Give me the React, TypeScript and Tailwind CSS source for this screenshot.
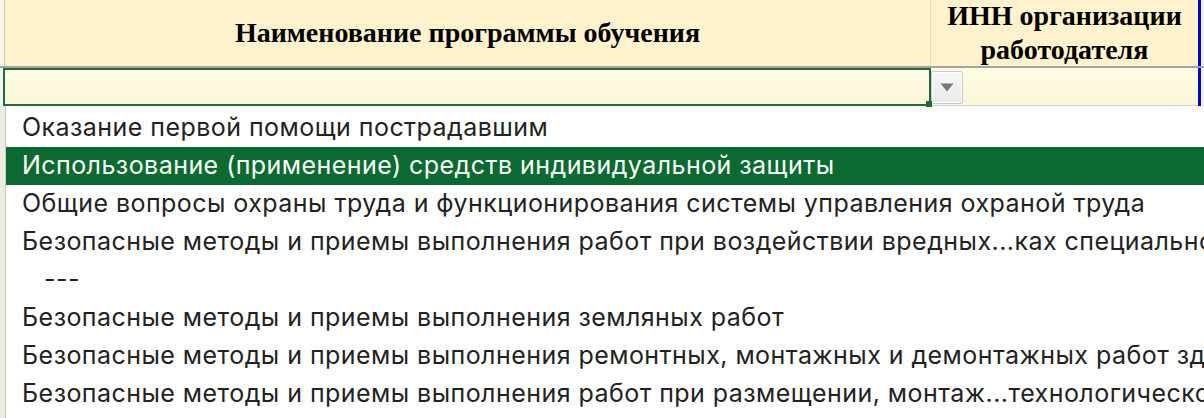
const OPTIONS = [
  "Оказание первой помощи пострадавшим",
  "Использование (применение) средств индивидуальной защиты",
  "Общие вопросы охраны труда и функционирования системы управления охраной труда",
  "Безопасные методы и приемы выполнения работ при воздействии вредных...ках специального",
  "---",
  "Безопасные методы и приемы выполнения земляных работ",
  "Безопасные методы и приемы выполнения ремонтных, монтажных и демонтажных работ зданий",
  "Безопасные методы и приемы выполнения работ при размещении, монтаж...технологического",
];

const SELECTED = 1;

export default function App() {
  return (
    <div className="relative w-[1204px] h-[418px] overflow-hidden bg-white">
      {/* Header row */}
      <div className="flex h-[66px] bg-[#fff2cc] font-['Liberation_Serif',serif] font-bold text-black">
        <div className="w-[5px] bg-[#f7f3e6] border-r border-[#c8c8c8]" />
        <div className="w-[926px] flex items-center justify-center text-[28px] border-r border-[#e3dcc4]">
          Наименование программы обучения
        </div>
        <div className="w-[267px] flex flex-col items-center justify-center text-[28px] leading-[34px]">
          <span>ИНН организации</span>
          <span>работодателя</span>
        </div>
        <div className="w-[3px] bg-[#0000d4]" />
        <div className="flex-1 bg-[#f4f4f4]" />
      </div>
      <div className="h-[2px] bg-[#a3a3a3]" />

      {/* Input row */}
      <div className="relative flex h-[38px]">
        <div className="w-[3px] bg-[#f4f4f4]" />
        <div className="w-[928px] border-2 border-[#1f6b3d] bg-gradient-to-b from-[#fffde6] to-[#fbf6d6]" />
        <div className="w-[267px] bg-gradient-to-b from-[#fffde6] to-[#fbf6d6] border-b border-[#d0d0d0]" />
        <div className="w-[3px] bg-[#0000d4]" />
        <div className="flex-1 bg-[#f4f4f4]" />

        {/* dropdown button */}
        <div className="absolute left-[931px] top-[3px] w-[32px] h-[33px] rounded-[2px] border border-[#c9c9c9] bg-gradient-to-b from-[#f7f7f7] to-[#e9e9e9] shadow-[0_0_0_1px_#ffffff_inset] flex items-center justify-center">
          <svg width="14" height="9" viewBox="0 0 14 9">
            <path d="M0.5 0.5h13L7 8.5z" fill="#777777" />
          </svg>
        </div>
        {/* fill handle */}
        <div className="absolute left-[926px] top-[33px] w-[6px] h-[6px] bg-[#1f6b3d]" />
      </div>

      {/* underlying sheet column */}
      <div className="absolute left-0 top-[106px] bottom-0 w-[6px] bg-[#eeebe0] border-r border-[#c8c8c8]" />

      {/* Dropdown list */}
      <div className="absolute left-[6px] right-0 top-[109px] bg-white font-['Inter',sans-serif] text-[25px] tracking-[0.45px] text-[#222222]">
        {OPTIONS.map((o, i) => (
          <div
            key={i}
            className={`h-[38px] flex items-center whitespace-nowrap overflow-hidden ${
              o === "---" ? "pl-[38px]" : "pl-[16px]"
            } ${i === SELECTED ? "bg-[#0a6a30] text-white" : ""}`}
          >
            {o}
          </div>
        ))}
      </div>
    </div>
  );
}
